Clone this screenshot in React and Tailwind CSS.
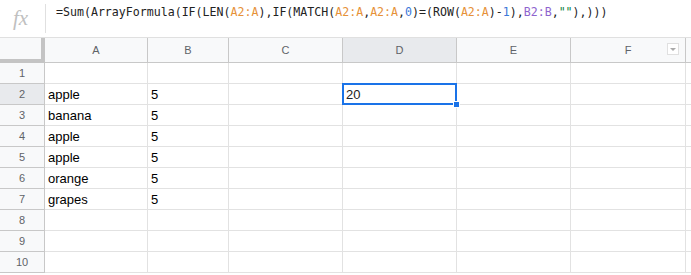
import React from "react";

const COLS = [
  { name: "A", w: "w-[103px]" },
  { name: "B", w: "w-[81px]" },
  { name: "C", w: "w-[114px]" },
  { name: "D", w: "w-[114px]" },
  { name: "E", w: "w-[114px]" },
  { name: "F", w: "w-[115px]" },
];

const DATA = {
  2: ["apple", "5"],
  3: ["banana", "5"],
  4: ["apple", "5"],
  5: ["apple", "5"],
  6: ["orange", "5"],
  7: ["grapes", "5"],
};

const Range = ({ children }) => <span className="text-[#e69138]">{children}</span>;
const Num = ({ children }) => <span className="text-[#3c78d8]">{children}</span>;

const FormulaBar = () => (
  <div className="flex h-[38px] border-b border-[#e0e0e0] bg-white">
    <div className="flex w-[45px] items-center justify-center">
      <span className="pr-1 font-['Liberation_Serif',serif] text-[21px] italic leading-none text-[#c0c0c0]">fx</span>
    </div>
    <div className="my-[4px] w-px bg-[#e0e0e0]" />
    <div className="pl-[10px] pt-[4px] font-['DejaVu_Sans_Mono',monospace] text-[11.6px] leading-[16px] text-[#222] whitespace-nowrap">
      =Sum(ArrayFormula(IF(LEN(<Range>A2:A</Range>),IF(MATCH(<Range>A2:A</Range>,<Range>A2:A</Range>,<Num>0</Num>)=(ROW(<Range>A2:A</Range>)-<Num>1</Num>),<span className="text-[#8e63ce]">B2:B</span>,<span className="text-[#0b8043]">""</span>),)))
    </div>
  </div>
);

const HeaderRow = () => (
  <div className="flex h-[25px] bg-[#f8f9fa] font-['Liberation_Sans',Arial,sans-serif] text-[11px] text-[#5f6368]">
    <div className="w-[45px] shrink-0 border-r-[4px] border-b-[4px] border-[#c4c4c4]" />
    {COLS.map((c) => (
      <div
        key={c.name}
        className={`${c.w} relative flex shrink-0 items-center justify-center border-r border-b border-[#c8c8c8] ${
          c.name === "D" ? "bg-[#e8eaed]" : ""
        }`}
      >
        {c.name}
        {c.name === "F" && (
          <div className="absolute right-[6px] top-[5px] flex h-[12px] w-[12px] items-center justify-center border border-[#e0e0e0] bg-white">
            <div className="h-0 w-0 border-x-[3px] border-t-[3px] border-x-transparent border-t-[#aaa]" />
          </div>
        )}
      </div>
    ))}
    <div className="flex-1 border-b border-[#c8c8c8]" />
  </div>
);

const Row = ({ n }) => {
  const vals = DATA[n] || [];
  return (
    <div className="flex h-[21px] font-['Liberation_Sans',Arial,sans-serif]">
      <div
        className={`flex w-[45px] shrink-0 items-center justify-center border-r border-b border-[#c8c8c8] text-[11px] text-[#5f6368] ${
          n === 2 ? "bg-[#e8eaed]" : "bg-[#f8f9fa]"
        }`}
      >
        {n}
      </div>
      {COLS.map((c, i) => {
        const selected = n === 2 && c.name === "D";
        return (
          <div
            key={c.name}
            className={`${c.w} relative flex shrink-0 items-end border-r border-b border-[#e2e2e2] pb-[2px] pl-[3px] text-[13px] leading-[15px] text-black ${
              selected ? "z-10" : ""
            }`}
          >
            {vals[i]}
            {selected && (
              <>
                <div className="absolute -left-px -top-px bottom-[-1px] right-[-1px] border-2 border-[#1a73e8]" />
                <span className="absolute left-[3px] bottom-[2px] text-[13px] leading-[15px] text-[#222]">20</span>
                <div className="absolute -bottom-[4px] -right-[4px] h-[7px] w-[7px] border border-white bg-[#1a73e8]" />
              </>
            )}
          </div>
        );
      })}
      <div className="flex-1 border-b border-[#e2e2e2]" />
    </div>
  );
};

export default function App() {
  return (
    <div className="relative h-[275px] w-[691px] overflow-hidden bg-white">
      <FormulaBar />
      <HeaderRow />
      {[1, 2, 3, 4, 5, 6, 7, 8, 9, 10].map((n) => (
        <Row key={n} n={n} />
      ))}
    </div>
  );
}
